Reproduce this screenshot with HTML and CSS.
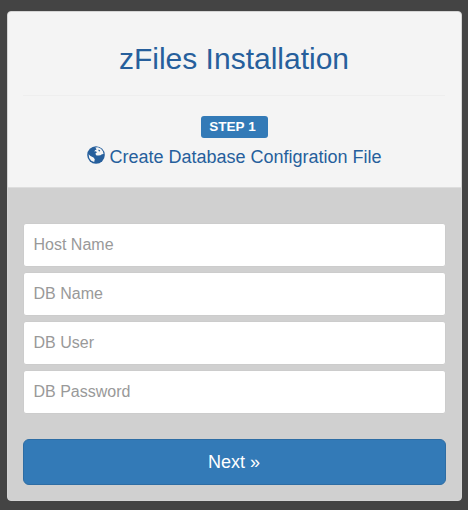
FILE: index.html
```html
<!DOCTYPE html>
<html lang="en">
<head>
<meta charset="utf-8">
<title>zFiles Installation</title>
<link rel="stylesheet" href="styles.css">
</head>
<body>
<main class="panel">
  <header class="panel-heading">
    <h1>zFiles Installation</h1>
    <hr>
    <span class="label">STEP 1</span>
    <h2><svg class="globe" viewBox="0 0 18 18" aria-hidden="true"><circle cx="9" cy="9" r="8.8" fill="#265f9c"/><path d="M8.3 1.5 11 1.3 14 2.8 16 5.4 16.5 8 14.9 8.3 13.5 9.2 11.5 9.5 9.5 9.4 8.3 7.8 9.8 6.6 9 5.3 7.4 5.4 8 4.3 9.6 3.4zM1.6 8.2 3.5 10 6.5 11.6 7.8 13.2 7.2 16 4.2 14.7 2.2 12z" fill="#f4f4f4"/><path d="M11.5 3.5 13.2 4.5 12.8 5.5 11.5 5z" fill="#265f9c"/></svg><span>Create Database Configration File</span></h2>
  </header>
  <form class="panel-body">
    <input type="text" placeholder="Host Name">
    <input type="text" placeholder="DB Name">
    <input type="text" placeholder="DB User">
    <input type="password" placeholder="DB Password">
    <button type="button">Next »</button>
  </form>
</main>
</body>
</html>
```
FILE: styles.css
```css
* { box-sizing: border-box; }
body { margin: 0; height: 510px; padding: 11px 6px 9px 7px; overflow: hidden; background: #444; font-family: "Liberation Sans", Arial, sans-serif; }
.panel { height: 490px; border: 1px solid #d4d4d4; border-radius: 4px; background: #d0d0d0; overflow: hidden; }
.panel-heading { height: 176px; padding: 0 16px 0 15px; border-bottom: 1px solid #ddd; background: #f4f4f4; color: #265f9c; display: flex; flex-direction: column; align-items: center; }
h1 { margin: 30px 0 0; font-size: 30px; line-height: 33px; font-weight: 400; }
hr { width: 100%; height: 1px; margin: 20px 0; border: 0; background: #eee; }
.label { width: 67px; height: 22px; padding-right: 3px; border-radius: 3px; background: #337ab7; color: #fff; font-size: 13.5px; line-height: 21px; font-weight: 700; text-align: center; }
h2 { display: flex; align-items: center; gap: 5px; margin: 9px 0 0; font-size: 18px; line-height: 20px; font-weight: 400; white-space: nowrap; }
.globe { width: 18px; height: 18px; position: relative; top: -2px; left: 0.5px; }
.panel-body { padding: 35px 15px 0; display: flex; flex-direction: column; gap: 5px; }
input { width: 100%; height: 44px; padding: 0 9.5px; border: 1px solid #ccc; border-radius: 3px; background: #fff; font: 16px "Liberation Sans", Arial, sans-serif; }
input::placeholder { color: #999; opacity: 1; }
button { height: 46px; margin-top: 20px; padding: 0 1px 0 0; border: 1px solid #2e6da4; border-radius: 6px; background: #337ab7; color: #fff; font: 18px "Liberation Sans", Arial, sans-serif; }
```
